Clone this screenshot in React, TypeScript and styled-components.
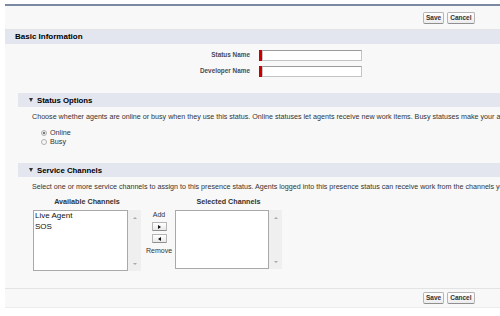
import styled, { createGlobalStyle } from 'styled-components';

const GlobalStyle = createGlobalStyle`
  html, body {
    margin: 0;
    padding: 0;
    background: #fff;
  }
  body {
    font-family: "Liberation Sans", Arial, sans-serif;
    overflow: hidden;
  }
`;

const Page = styled.div`
  width: 500px;
  height: 316px;
  overflow: hidden;
  box-sizing: border-box;
  padding: 4px 0 0 5px;
`;

const Panel = styled.div`
  width: 900px;
  background: #f8f8f8;
  border-top: 2px solid #7b8aa2;
  border-bottom: 1px solid #ececec;
`;

const ButtonBar = styled.div<{ bottom?: boolean }>`
  display: grid;
  grid-template-columns: 418px auto;
  align-items: center;
  height: ${p => (p.bottom ? '18px' : '23px')};
  border-top: ${p => (p.bottom ? '1px solid #e3e3e3' : 'none')};
  border-bottom: ${p => (p.bottom ? 'none' : '1px solid #e3e3e3')};
`;

const Buttons = styled.div`
  display: flex;
  gap: 3px;
`;

const Button = styled.button`
  height: 12px;
  padding: 0 2px;
  font-family: inherit;
  font-size: 6.5px;
  font-weight: bold;
  line-height: 10px;
  color: #333;
  background: linear-gradient(#ffffff, #ececec);
  border: 1px solid #b5b5b5;
  border-bottom-color: #8f8f8f;
  border-radius: 2px;
`;

const SectionHeader = styled.div`
  height: 14px;
  line-height: 14px;
  padding-left: 10px;
  background: #e3e6ee;
  font-size: 8px;
  font-weight: bold;
  color: #000;
`;

const Form = styled.div`
  display: grid;
  grid-template-columns: 245px auto;
  column-gap: 9px;
  row-gap: 5px;
  padding-top: 6px;
  margin-bottom: 16px;
`;

const Label = styled.div`
  text-align: right;
  font-size: 6.4px;
  font-weight: bold;
  color: #4a4a56;
  line-height: 9px;
`;

const Field = styled.div`
  display: flex;
  height: 11px;
`;

const RequiredBar = styled.div`
  width: 3px;
  background: #c00;
`;

const TextInput = styled.div`
  width: 100px;
  box-sizing: border-box;
  background: #fff;
  border: 1px solid #c4c4c4;
  border-top-color: #9c9c9c;
`;

const SubSection = styled.div`
  margin-left: 13px;
`;

const SubHeader = styled.div`
  display: flex;
  align-items: center;
  gap: 4px;
  height: 14px;
  padding-left: 11px;
  background: #e3e6ee;
  font-size: 7.8px;
  font-weight: bold;
  color: #000;
`;

const Twisty = styled.span`
  width: 0;
  height: 0;
  border-left: 2.5px solid transparent;
  border-right: 2.5px solid transparent;
  border-top: 4px solid #333;
`;

const Description = styled.div`
  padding: 6px 0 0 14px;
  font-size: 7.15px;
  line-height: 9px;
  color: #333;
  white-space: nowrap;
`;

const RadioList = styled.div`
  padding: 6px 0 0 23px;
  margin-bottom: 17px;
`;

const RadioRow = styled.div`
  display: flex;
  align-items: center;
  gap: 3px;
  height: 9px;
  font-size: 7.2px;
  color: #333;
`;

const Radio = styled.span<{ checked?: boolean }>`
  width: 6px;
  height: 6px;
  box-sizing: border-box;
  border-radius: 50%;
  border: 1px solid #b0b0b0;
  background: ${p => (p.checked ? 'radial-gradient(circle, #777 0 1.2px, #f4f4f4 1.6px)' : '#f7f7f7')};
`;

const DuelList = styled.div`
  display: flex;
  padding: 6px 0 0 15px;
  margin-bottom: 17px;
`;

const ListColumn = styled.div`
  display: flex;
  flex-direction: column;
  align-items: center;
  gap: 4px;
`;

const ColumnTitle = styled.div`
  font-size: 7.2px;
  font-weight: bold;
  color: #333;
  line-height: 8px;
`;

const ListBox = styled.div<{ tall?: number }>`
  display: flex;
  height: ${p => p.tall ?? 61}px;
`;

const ListArea = styled.div<{ w: number }>`
  width: ${p => p.w}px;
  box-sizing: border-box;
  background: #fff;
  border: 1px solid #a9a9a9;
  padding-left: 1px;
  font-size: 8px;
  line-height: 10.5px;
  color: #111;
`;

const ScrollTrack = styled.div`
  width: 13px;
  background: #efefef;
  display: flex;
  flex-direction: column;
  justify-content: space-between;
  align-items: center;
  padding: 7px 0 6px;
  box-sizing: border-box;
`;

const ScrollArrow = styled.span<{ down?: boolean }>`
  width: 0;
  height: 0;
  border-left: 2.5px solid transparent;
  border-right: 2.5px solid transparent;
  ${p => (p.down ? 'border-top: 2.5px solid #a8a8a8;' : 'border-bottom: 2.5px solid #a8a8a8;')}
`;

const MoveColumn = styled.div`
  width: 26px;
  margin: 0 3px 0 5px;
  padding-top: 13px;
  display: flex;
  flex-direction: column;
  align-items: center;
  font-size: 7px;
  color: #333;
  line-height: 8px;
`;

const MoveButton = styled.div`
  width: 15px;
  height: 9px;
  box-sizing: border-box;
  margin-top: 3px;
  display: flex;
  align-items: center;
  justify-content: center;
  background: linear-gradient(#ffffff, #e9e9e9);
  border: 1px solid #b5b5b5;
  border-bottom-color: #8f8f8f;
  border-radius: 1px;
`;

const MoveArrow = styled.span<{ left?: boolean }>`
  width: 0;
  height: 0;
  border-top: 2px solid transparent;
  border-bottom: 2px solid transparent;
  ${p => (p.left ? 'border-right: 3px solid #111;' : 'border-left: 3px solid #111;')}
`;

const RemoveLabel = styled.div`
  margin-top: 4px;
`;

function ChannelList({ items, width, height }: { items: string[]; width: number; height?: number }) {
  return (
    <ListBox tall={height}>
      <ListArea w={width}>
        {items.map(item => (
          <div key={item}>{item}</div>
        ))}
      </ListArea>
      <ScrollTrack>
        <ScrollArrow />
        <ScrollArrow down />
      </ScrollTrack>
    </ListBox>
  );
}

function ActionButtons() {
  return (
    <Buttons>
      <Button>Save</Button>
      <Button>Cancel</Button>
    </Buttons>
  );
}

export default function App() {
  return (
    <Page>
      <GlobalStyle />
      <Panel>
        <ButtonBar>
          <div />
          <ActionButtons />
        </ButtonBar>

        <SectionHeader>Basic Information</SectionHeader>
        <Form>
          <Label>Status Name</Label>
          <Field>
            <RequiredBar />
            <TextInput />
          </Field>
          <Label>Developer Name</Label>
          <Field>
            <RequiredBar />
            <TextInput />
          </Field>
        </Form>

        <SubSection>
          <SubHeader>
            <Twisty />
            Status Options
          </SubHeader>
          <Description>
            Choose whether agents are online or busy when they use this status. Online statuses let agents receive new work items. Busy statuses make your agents unavailable for new work items.
          </Description>
          <RadioList>
            <RadioRow>
              <Radio checked />
              Online
            </RadioRow>
            <RadioRow>
              <Radio />
              Busy
            </RadioRow>
          </RadioList>

          <SubHeader>
            <Twisty />
            Service Channels
          </SubHeader>
          <Description>
            Select one or more service channels to assign to this presence status. Agents logged into this presence status can receive work from the channels you select.
          </Description>
          <DuelList>
            <ListColumn>
              <ColumnTitle>Available Channels</ColumnTitle>
              <ChannelList items={['Live Agent', 'SOS']} width={95} />
            </ListColumn>
            <MoveColumn>
              <div>Add</div>
              <MoveButton>
                <MoveArrow />
              </MoveButton>
              <MoveButton>
                <MoveArrow left />
              </MoveButton>
              <RemoveLabel>Remove</RemoveLabel>
            </MoveColumn>
            <ListColumn>
              <ColumnTitle>Selected Channels</ColumnTitle>
              <ChannelList items={[]} width={94} height={59} />
            </ListColumn>
          </DuelList>
        </SubSection>

        <ButtonBar bottom>
          <div />
          <ActionButtons />
        </ButtonBar>
      </Panel>
    </Page>
  );
}
